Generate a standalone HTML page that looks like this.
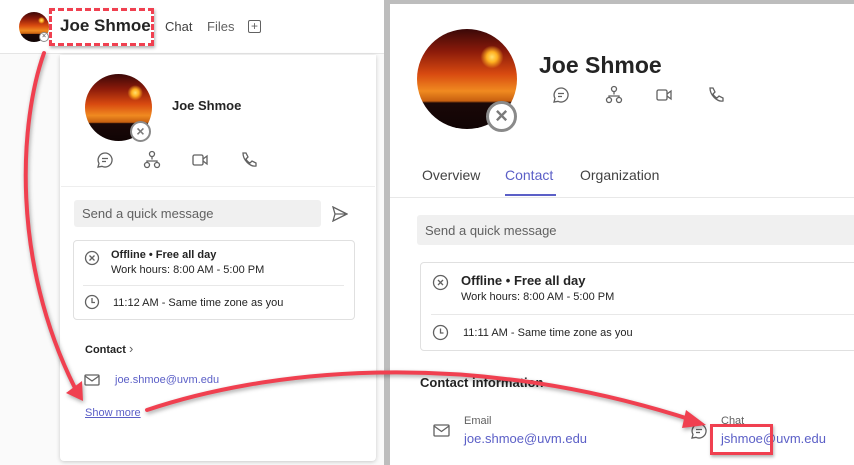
<!DOCTYPE html>
<html><head><meta charset="utf-8"><style>
*{margin:0;padding:0;box-sizing:border-box}
body{width:854px;height:465px;overflow:hidden;position:relative;background:#fff;font-family:"Liberation Sans",sans-serif;color:#242424}
.a{position:absolute}
.sun{background:radial-gradient(circle at 75% 28%,#ffe070 0,#ffb020 5%,transparent 11%),linear-gradient(180deg,#3a0808 0%,#8a1a0a 22%,#d84a10 45%,#f08a20 62%,#c86010 72%,#1a0808 74%,#100404 100%);border-radius:50%}
.badge{border-radius:50%;background:#fff;border:2px solid #8a8a8a;color:#7a7a7a;text-align:center;font-weight:bold}
.ic{stroke:#616161;fill:none;stroke-width:1.3}
.link{color:#5b5fc7}
</style></head><body>
<div class="a" style="left:0;top:0;width:384px;height:465px;background:#fafafa"></div>
<div class="a" style="left:0;top:0;width:384px;height:54px;background:#fff;border-bottom:1px solid #e5e5e5"></div>
<div class="a sun" style="left:19px;top:12px;width:30px;height:30px"></div>
<div class="a badge" style="left:39px;top:32px;width:10px;height:10px;border-width:1px;font-size:7px;line-height:8px">×</div>
<div class="a" style="left:60px;top:16px;font-size:17px;font-weight:bold">Joe Shmoe</div>
<div class="a" style="left:49px;top:8px;width:105px;height:38px;border:3px dashed #f04050;box-shadow:1px 2px 3px rgba(0,0,0,.3)"></div>
<div class="a" style="left:165px;top:19px;font-size:13px;color:#424242">Chat</div>
<div class="a" style="left:207px;top:19px;font-size:13px;color:#616161">Files</div>
<div class="a" style="left:248px;top:20px;width:13px;height:13px;border:1.3px solid #616161;border-radius:2px;font-size:12px;line-height:10px;text-align:center;color:#616161">+</div>
<div class="a" style="left:60px;top:55px;width:316px;height:406px;background:#fff;box-shadow:0 1px 4px rgba(0,0,0,.2);border-radius:0 0 4px 4px"></div>
<div class="a" style="left:61px;top:186px;width:314px;height:1px;background:#eee"></div>
<div class="a sun" style="left:85px;top:74px;width:67px;height:67px"></div>
<div class="a badge" style="left:130px;top:121px;width:21px;height:21px;font-size:14px;line-height:17px">×</div>
<div class="a" style="left:172px;top:98px;font-size:13px;font-weight:bold">Joe Shmoe</div>
<svg class="a" style="left:95px;top:150px" width="170" height="20"><g class="ic">
<path d="M10 3a7 7 0 1 1-3 13.3L3 17l1-3.6A7 7 0 0 1 10 3zM7 8.5h6M7 11.5h4"/>
<circle cx="57" cy="4" r="2.5"/><circle cx="52" cy="15" r="2.5"/><circle cx="62" cy="15" r="2.5"/><path d="M57 6.5v3M52 12.5v-1.5h10v1.5"/>
<rect x="98" y="5" width="10" height="10" rx="1.5"/><path d="M108 9l4-3v8l-4-3"/>
<path d="M148 3l3 0 2 4-2 2a8 8 0 0 0 4 4l2-2 4 2v3c-6 1-13-6-13-13z"/>
</g></svg>
<div class="a" style="left:74px;top:200px;width:247px;height:27px;background:#f0f0f0;border-radius:3px;font-size:13px;color:#616161;padding:6px 8px">Send a quick message</div>
<svg class="a" style="left:332px;top:206px" width="16" height="16"><path class="ic" d="M1 1l14 7-14 7 2-7zM3 8h12"/></svg>
<div class="a" style="left:73px;top:240px;width:282px;height:80px;border:1px solid #e0e0e0;border-radius:4px"></div>
<div class="a" style="left:83px;top:285px;width:261px;height:1px;background:#e8e8e8"></div>
<svg class="a" style="left:84px;top:250px" width="16" height="16"><circle class="ic" cx="8" cy="8" r="6.5"/><path class="ic" d="M5.5 5.5l5 5M10.5 5.5l-5 5" stroke-width="1.6"/></svg>
<div class="a" style="left:111px;top:249px;font-size:11px;font-weight:bold">Offline • Free all day</div>
<div class="a" style="left:111px;top:264px;font-size:11px">Work hours: 8:00 AM - 5:00 PM</div>
<svg class="a" style="left:84px;top:294px" width="16" height="16"><circle class="ic" cx="8" cy="8" r="6.5"/><path class="ic" d="M8 4v4.5h3"/></svg>
<div class="a" style="left:113px;top:297px;font-size:11px">11:12 AM - Same time zone as you</div>
<div class="a" style="left:85px;top:341px;font-size:11px;font-weight:bold">Contact <span style="font-weight:normal;color:#616161;font-size:13px">›</span></div>
<svg class="a" style="left:84px;top:374px" width="16" height="12"><rect class="ic" x="1" y="1" width="14" height="10" rx="1"/><path class="ic" d="M1 2l7 5 7-5"/></svg>
<div class="a link" style="left:115px;top:374px;font-size:11px">joe.shmoe@uvm.edu</div>
<div class="a link" style="left:85px;top:407px;font-size:11px;text-decoration:underline">Show more</div>
<div class="a" style="left:384px;top:0;width:470px;height:465px;background:#bdbdbd"></div>
<div class="a" style="left:390px;top:4px;width:464px;height:461px;background:#fff"></div>
<div class="a sun" style="left:417px;top:29px;width:100px;height:100px"></div>
<div class="a badge" style="left:486px;top:101px;width:31px;height:31px;border-width:3px;font-size:22px;line-height:24px">×</div>
<div class="a" style="left:539px;top:52px;font-size:23px;font-weight:bold">Joe Shmoe</div>
<svg class="a" style="left:551px;top:85px" width="180" height="20"><g class="ic">
<path d="M10 3a7 7 0 1 1-3 13.3L3 17l1-3.6A7 7 0 0 1 10 3zM7 8.5h6M7 11.5h4"/>
<circle cx="63" cy="4" r="2.5"/><circle cx="58" cy="15" r="2.5"/><circle cx="68" cy="15" r="2.5"/><path d="M63 6.5v3M58 12.5v-1.5h10v1.5"/>
<rect x="106" y="5" width="10" height="10" rx="1.5"/><path d="M116 9l4-3v8l-4-3"/>
<path d="M159 3l3 0 2 4-2 2a8 8 0 0 0 4 4l2-2 4 2v3c-6 1-13-6-13-13z"/>
</g></svg>
<div class="a" style="left:422px;top:167px;font-size:14px;color:#424242">Overview</div>
<div class="a" style="left:505px;top:167px;font-size:14px;color:#5b5fc7">Contact</div>
<div class="a" style="left:505px;top:194px;width:51px;height:2px;background:#5b5fc7"></div>
<div class="a" style="left:580px;top:167px;font-size:14px;color:#424242">Organization</div>
<div class="a" style="left:390px;top:197px;width:464px;height:1px;background:#e8e8e8"></div>
<div class="a" style="left:417px;top:215px;width:437px;height:30px;background:#f0f0f0;border-radius:3px 0 0 3px;font-size:13px;color:#616161;padding:8px 8px">Send a quick message</div>
<div class="a" style="left:420px;top:262px;width:440px;height:89px;border:1px solid #e0e0e0;border-radius:4px"></div>
<div class="a" style="left:431px;top:314px;width:423px;height:1px;background:#e8e8e8"></div>
<svg class="a" style="left:432px;top:274px" width="17" height="17"><circle class="ic" cx="8.5" cy="8.5" r="7"/><path class="ic" d="M6 6l5 5M11 6l-5 5" stroke-width="1.7"/></svg>
<div class="a" style="left:461px;top:273px;font-size:13px;font-weight:bold">Offline • Free all day</div>
<div class="a" style="left:461px;top:291px;font-size:11px">Work hours: 8:00 AM - 5:00 PM</div>
<svg class="a" style="left:432px;top:324px" width="17" height="17"><circle class="ic" cx="8.5" cy="8.5" r="7"/><path class="ic" d="M8.5 4.5v4.5h3"/></svg>
<div class="a" style="left:463px;top:327px;font-size:11px">11:11 AM - Same time zone as you</div>
<div class="a" style="left:420px;top:375px;font-size:13px;font-weight:bold">Contact information</div>
<svg class="a" style="left:433px;top:424px" width="17" height="13"><rect class="ic" x="1" y="1" width="15" height="11" rx="1"/><path class="ic" d="M1 2l7.5 5.5L16 2"/></svg>
<div class="a" style="left:464px;top:415px;font-size:11px;color:#616161">Email</div>
<div class="a link" style="left:464px;top:431px;font-size:13px">joe.shmoe@uvm.edu</div>
<svg class="a" style="left:690px;top:422px" width="18" height="18"><path class="ic" d="M9 2a7 7 0 1 1-3 13.3L2 16l1-3.6A7 7 0 0 1 9 2zM6 7.5h6M6 10.5h4"/></svg>
<div class="a" style="left:721px;top:415px;font-size:11px;color:#616161">Chat</div>
<div class="a link" style="left:721px;top:431px;font-size:13px">jshmoe@uvm.edu</div>
<div class="a" style="left:710px;top:424px;width:63px;height:31px;border:3px solid #f04050;box-shadow:1px 2px 3px rgba(0,0,0,.3)"></div>
<svg class="a" style="left:0;top:0;filter:drop-shadow(1px 2px 2px rgba(0,0,0,.35))" width="854" height="465">
<path d="M44 53C20 120 10 260 76 390" stroke="#f04050" stroke-width="4" fill="none" stroke-linecap="round"/>
<path d="M66 393l17 8-1-20z" fill="#f04050"/>
<path d="M147 410C260 372 460 345 692 420" stroke="#f04050" stroke-width="4" fill="none" stroke-linecap="round"/>
<path d="M686 410l20 15-24 3z" fill="#f04050"/>
</svg>
</body></html>
